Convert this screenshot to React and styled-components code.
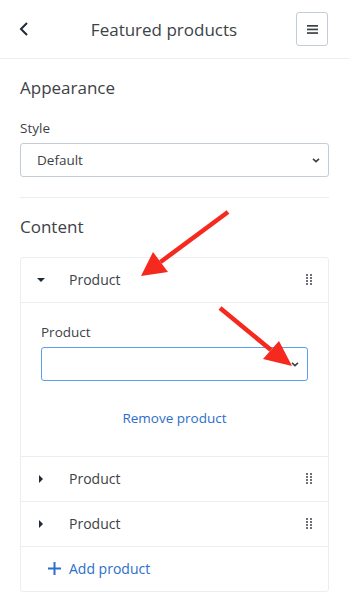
import React from 'react';
import styled, { createGlobalStyle } from 'styled-components';

const Global = createGlobalStyle`
  html, body {
    margin: 0;
    background: #fff;
  }
  body {
    font-family: 'Open Sans', 'Liberation Sans', sans-serif;
    color: #3d4246;
  }
`;

const Page = styled.div`
  position: relative;
  width: 349px;
  height: 613px;
  overflow: hidden;
`;

const Header = styled.header`
  height: 58px;
  border-bottom: 1px solid #ebeef0;
  display: flex;
  align-items: center;
  justify-content: space-between;
  padding: 0 21px 0 18px;
`;

const Title = styled.h1`
  margin: 0;
  font-size: 17px;
  font-weight: 400;
  color: #3d4246;
`;

const IconButton = styled.button`
  width: 32px;
  height: 34px;
  border: 1px solid #c4cdd5;
  border-radius: 3px;
  background: #fff;
  display: flex;
  align-items: center;
  justify-content: center;
  padding: 0;
`;

const BackButton = styled.button`
  border: 0;
  background: none;
  padding: 0;
  width: 14px;
  display: flex;
  align-items: center;
`;

const Section = styled.section`
  padding: ${p => p.$top || 17}px 20px 0;
`;

const Heading = styled.h2`
  margin: 0;
  font-size: 17px;
  line-height: 24px;
  font-weight: 400;
  color: #3d4246;
`;

const Label = styled.label`
  display: block;
  font-size: 13.5px;
  line-height: 20px;
  margin-top: ${p => p.$top || 0}px;
  margin-bottom: 5px;
  color: #3d4246;
`;

const Select = styled.div`
  height: 34px;
  box-sizing: border-box;
  border: 1px solid ${p => (p.$focus ? '#5c9ded' : '#c4cdd5')};
  border-radius: 3px;
  display: flex;
  align-items: center;
  justify-content: space-between;
  padding: 0 6px 0 16px;
  font-size: 13.5px;
  color: #3d4246;
`;

const Divider = styled.hr`
  border: 0;
  border-top: 1px solid #ebeef0;
  margin: 20px 0 0;
`;

const Card = styled.div`
  margin-top: 18px;
  border: 1px solid #ebeef0;
  border-radius: 3px;
`;

const Row = styled.div`
  height: 45px;
  box-sizing: border-box;
  padding: 0 16px 2px 11px;
  border-bottom: 1px solid #ebeef0;
  display: flex;
  align-items: center;
  font-size: 14px;
  color: #3d4246;
`;

const Caret = styled.span`
  width: 17px;
  display: flex;
  justify-content: center;
  margin-top: 2px;
`;

const RowLabel = styled.span`
  flex: 1;
  margin-left: 20px;
`;

const Panel = styled.div`
  padding: 19px 20px 28px;
  border-bottom: 1px solid #ebeef0;
`;

const Link = styled.a`
  display: block;
  text-align: center;
  color: #2c6ecb;
  font-size: 13.5px;
  line-height: 20px;
  margin-top: 27px;
  text-decoration: none;
`;

const AddRow = styled.div`
  height: 44px;
  box-sizing: border-box;
  padding: 0 0 2px 27px;
  display: flex;
  align-items: center;
  color: #2c6ecb;
  font-size: 14px;
  gap: 8px;
`;

const Overlay = styled.svg`
  position: absolute;
  left: 0;
  top: 0;
  pointer-events: none;
`;

const Chevron = () => (
  <svg width="12" height="12" viewBox="0 0 12 12">
    <path d="M3 4.8 L6 7.6 L9 4.8" fill="none" stroke="#3d4246" strokeWidth="1.6" />
  </svg>
);

const Handle = () => (
  <svg width="6" height="12" viewBox="0 0 6 12" style={{ marginTop: 2 }}>
    {[0, 1, 2, 3].map(r =>
      [0, 1].map(c => (
        <rect key={`${r}-${c}`} x={c * 4} y={r * 3} width="2" height="2" fill="#6b7177" />
      ))
    )}
  </svg>
);

const ProductRow = ({ open }) => (
  <Row>
    <Caret>
      {open ? (
        <svg width="8" height="4" viewBox="0 0 8 4">
          <path d="M0 0 H8 L4 4 Z" fill="#212b36" />
        </svg>
      ) : (
        <svg width="4" height="8" viewBox="0 0 4 8">
          <path d="M0 0 V8 L4 4 Z" fill="#212b36" />
        </svg>
      )}
    </Caret>
    <RowLabel>Product</RowLabel>
    <Handle />
  </Row>
);

const Arrow = ({ tail, tip, a, b }) => (
  <g>
    <line x1={tail[0]} y1={tail[1]} x2={(a[0] + b[0]) / 2} y2={(a[1] + b[1]) / 2} stroke="#f5291d" strokeWidth="4.5" />
    <polygon points={`${tip.join(',')} ${a.join(',')} ${b.join(',')}`} fill="#f5291d" />
  </g>
);

export default function App() {
  return (
    <Page>
      <Global />
      <Header>
        <BackButton aria-label="Back">
          <svg width="12" height="16" viewBox="0 0 12 16">
            <path d="M9 2 L3 8 L9 14" fill="none" stroke="#212b36" strokeWidth="2" />
          </svg>
        </BackButton>
        <Title>Featured products</Title>
        <IconButton aria-label="Menu">
          <svg width="11" height="9" viewBox="0 0 11 9">
            <rect x="0" y="0" width="11" height="1.7" fill="#3d4246" />
            <rect x="0" y="3.6" width="11" height="1.7" fill="#3d4246" />
            <rect x="0" y="7.2" width="11" height="1.7" fill="#3d4246" />
          </svg>
        </IconButton>
      </Header>

      <Section>
        <Heading>Appearance</Heading>
        <Label $top={18}>Style</Label>
        <Select>
          Default
          <Chevron />
        </Select>
        <Divider />
      </Section>

      <Section $top={17}>
        <Heading>Content</Heading>
        <Card>
          <ProductRow open />
          <Panel>
            <Label>Product</Label>
            <Select $focus>
              <span />
              <Chevron />
            </Select>
            <Link href="#">Remove product</Link>
          </Panel>
          <ProductRow />
          <ProductRow />
          <AddRow>
            <svg width="13" height="13" viewBox="0 0 13 13">
              <path d="M6.5 0 V13 M0 6.5 H13" stroke="#2c6ecb" strokeWidth="2" />
            </svg>
            Add product
          </AddRow>
        </Card>
      </Section>

      <Overlay width="349" height="613">
        <Arrow tail={[228, 212]} tip={[141, 276]} a={[153, 252]} b={[168, 272]} />
        <Arrow tail={[220, 308]} tip={[292, 366]} a={[263, 359]} b={[279, 341]} />
      </Overlay>
    </Page>
  );
}
